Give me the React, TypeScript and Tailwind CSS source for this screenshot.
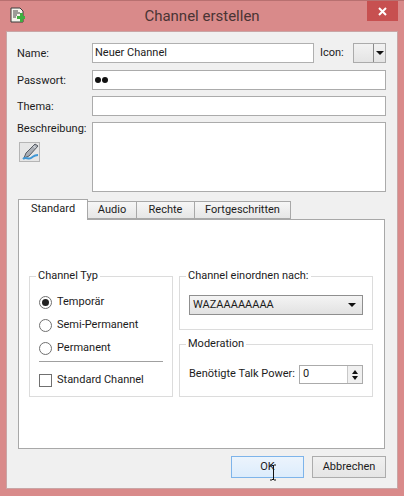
import React from 'react';

const Field: React.FC<{ label: string; children: React.ReactNode; className?: string }> = ({ label, children, className }) => (
  <div className={`flex items-center ${className ?? ''}`}>
    <span className="w-[75px] shrink-0 pt-[2px]">{label}</span>
    {children}
  </div>
);

const Radio: React.FC<{ label: string; checked?: boolean }> = ({ label, checked }) => (
  <div className="flex h-[23px] items-center gap-[5px]">
    <span className="flex h-[13px] w-[13px] items-center justify-center rounded-full border border-[#707070] bg-white">
      {checked && <span className="h-[7px] w-[7px] rounded-full bg-[#222]" />}
    </span>
    <span>{label}</span>
  </div>
);

const Tab: React.FC<{ label: string; width: string }> = ({ label, width }) => (
  <div className={`-ml-px flex h-[18px] items-center justify-center border border-[#a8a8a8] bg-gradient-to-b from-[#f6f6f6] to-[#e6e6e6] ${width}`}>
    {label}
  </div>
);

const inputCls = 'flex h-[20px] items-center border border-[#ababab] bg-white px-[2px]';

export default function App() {
  return (
    <div className="flex h-[496px] w-[404px] flex-col overflow-hidden border-t border-[#b87070] bg-[#d98a8a] font-['Roboto',sans-serif] text-[11px] text-[#1c1c1c]">
      <div className="grid h-[30px] shrink-0 grid-cols-[1fr_auto_1fr] items-start">
        <div className="pl-[10px] pt-[6px]">
          <svg width="15" height="16" viewBox="0 0 15 16">
            <path d="M1 1h9l3 3v11H1z" fill="#f4f4ec" stroke="#3a3a3a" />
            <path d="M3 4h5M3 6h7M3 8h4M3 10h3" stroke="#444" />
            <path d="M7 9h3V6h3v3h2v3h-2v3h-3v-3H7z" fill="#3fae3f" />
          </svg>
        </div>
        <div className="pt-[5px] text-[15px] leading-[20px] text-[#4a3434]">Channel erstellen</div>
        <div className="flex justify-end pr-[6px]">
          <div className="flex h-[20px] w-[31px] items-center justify-center bg-[#c75050]">
            <svg width="9" height="9" viewBox="0 0 9 9">
              <path d="M1 1l7 7M8 1l-7 7" stroke="#fff" strokeWidth="2" />
            </svg>
          </div>
        </div>
      </div>

      <div className="mx-[6px] flex h-[458px] w-[392px] shrink-0 flex-col border border-[#c9a5a5] bg-[#f0f0f0] px-[10px] pt-[11px]">
        <Field label="Name:">
          <div className={`${inputCls} w-[222px] border-[#b0b0b0]`}>Neuer Channel</div>
          <span className="ml-[6px] w-[33px]">Icon:</span>
          <div className="flex h-[20px] w-[33px] border border-[#ababab] bg-gradient-to-b from-[#f2f2f2] to-[#e4e4e4]">
            <div className="w-[20px] border-r border-[#8a8a8a]" />
            <div className="flex flex-1 items-center justify-center">
              <span className="h-0 w-0 border-x-[4px] border-t-[4px] border-x-transparent border-t-[#111]" />
            </div>
          </div>
        </Field>
        <Field label="Passwort:" className="mt-[7px]">
          <div className={`${inputCls} w-[294px] gap-[1px]`}>
            <span className="h-[6px] w-[6px] rounded-full bg-[#111]" />
            <span className="h-[6px] w-[6px] rounded-full bg-[#111]" />
          </div>
        </Field>
        <Field label="Thema:" className="mt-[6px]">
          <div className={`${inputCls} w-[294px]`} />
        </Field>
        <div className="mt-[6px] flex">
          <div className="w-[75px] shrink-0">
            <div className="leading-[14px]">Beschreibung:</div>
            <div className="mt-[6px] ml-[2px] flex h-[20px] w-[21px] items-center justify-center border border-[#b5b5b5] bg-[#e6e6e6]">
              <svg width="18" height="18" viewBox="0 0 18 18">
                <path d="M14 1l3 2-9 10-5 2 2-5z" fill="#a9aeb5" stroke="#555a62" />
                <path d="M12.500 3l2 2" stroke="#eef0f2" />
                <path d="M2 16c3-3 5 1 8-1s3-3 7-3" fill="none" stroke="#3f97d6" strokeWidth="2" />
              </svg>
            </div>
          </div>
          <div className={`${inputCls} h-[70px] w-[294px]`} />
        </div>

        <div className="mt-[6px] ml-[1px] flex h-[21px] items-end">
          <div className="z-10 -mb-px flex h-[21px] w-[70px] items-center justify-center border border-b-0 border-[#a8a8a8] bg-white pb-[1px]">
            Standard
          </div>
          <Tab label="Audio" width="w-[50px]" />
          <Tab label="Rechte" width="w-[59px]" />
          <Tab label="Fortgeschritten" width="w-[97px]" />
        </div>
        <div className="ml-[1px] flex h-[230px] w-[367px] gap-[6px] border border-[#a8a8a8] bg-white pl-[10px] pt-[49px]">
          <fieldset className="h-[128px] w-[144px] border border-[#dcdcdc] px-[9px]">
            <legend className="-ml-[3px] px-[2px] leading-[14px]">Channel Typ</legend>
            <div className="mt-[8px]">
              <Radio label="Temporär" checked />
              <Radio label="Semi-Permanent" />
              <Radio label="Permanent" />
            </div>
            <div className="mt-[1px] h-px bg-[#a0a0a0]" />
            <div className="mt-[10px] flex items-center gap-[5px]">
              <span className="h-[13px] w-[13px] border border-[#707070] bg-white" />
              <span>Standard Channel</span>
            </div>
          </fieldset>
          <div className="flex flex-col gap-[7px]">
            <fieldset className="h-[61px] w-[194px] border border-[#dcdcdc] px-[9px]">
              <legend className="-ml-[3px] px-[2px] leading-[14px]">Channel einordnen nach:</legend>
              <div className="mt-[12px] flex h-[20px] items-center justify-between border border-[#8f8f8f] bg-gradient-to-b from-[#f4f4f4] to-[#e2e2e2] pl-[3px] pr-[6px]">
                <span>WAZAAAAAAAA</span>
                <span className="h-0 w-0 border-x-[4px] border-t-[4px] border-x-transparent border-t-[#111]" />
              </div>
            </fieldset>
            <fieldset className="h-[60px] w-[194px] border border-[#dcdcdc] px-[9px]">
              <legend className="-ml-[3px] px-[2px] leading-[14px]">Moderation</legend>
              <div className="mt-[14px] flex items-center justify-between">
                <span className="whitespace-nowrap">Benötigte Talk Power:</span>
                <div className="flex h-[19px] w-[64px] items-center justify-between border border-[#ababab] pl-[3px]">
                  <span>0</span>
                  <div className="flex h-full w-[15px] flex-col items-center justify-center gap-[2px] border-l border-[#c8c8c8] bg-[#f0f0f0]">
                    <span className="h-0 w-0 border-x-[3px] border-b-[4px] border-x-transparent border-b-[#111]" />
                    <span className="h-0 w-0 border-x-[3px] border-t-[4px] border-x-transparent border-t-[#111]" />
                  </div>
                </div>
              </div>
            </fieldset>
          </div>
        </div>

        <div className="mt-[7px] flex justify-end gap-[8px] pr-[1px]">
          <div className="relative flex h-[22px] w-[73px] items-center justify-center border border-[#7eb4ea] bg-gradient-to-b from-[#ecf4fc] to-[#dcecfc]">
            OK
            <svg className="absolute left-[37px] top-[7px]" width="9" height="18" viewBox="0 0 9 18">
              <path d="M1 1h2l1 1 1-1h2M4.500 2v13M1 16h2l1-1 1 1h2" fill="none" stroke="#111" />
            </svg>
          </div>
          <div className="flex h-[22px] w-[74px] items-center justify-center border border-[#acacac] bg-gradient-to-b from-[#f0f0f0] to-[#e5e5e5]">
            Abbrechen
          </div>
        </div>
      </div>
    </div>
  );
}
